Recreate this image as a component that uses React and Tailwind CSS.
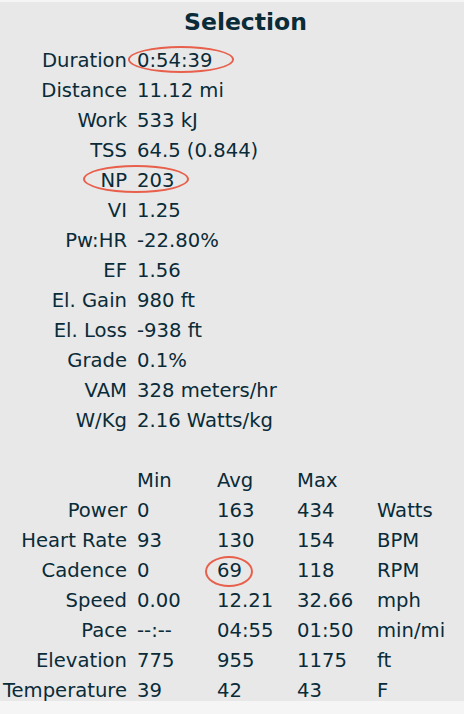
import React from "react";

const summary = [
  ["Duration", "0:54:39"],
  ["Distance", "11.12 mi"],
  ["Work", "533 kJ"],
  ["TSS", "64.5 (0.844)"],
  ["NP", "203"],
  ["VI", "1.25"],
  ["Pw:HR", "-22.80%"],
  ["EF", "1.56"],
  ["El. Gain", "980 ft"],
  ["El. Loss", "-938 ft"],
  ["Grade", "0.1%"],
  ["VAM", "328 meters/hr"],
  ["W/Kg", "2.16 Watts/kg"],
];

const table = [
  ["Power", "0", "163", "434", "Watts"],
  ["Heart Rate", "93", "130", "154", "BPM"],
  ["Cadence", "0", "69", "118", "RPM"],
  ["Speed", "0.00", "12.21", "32.66", "mph"],
  ["Pace", "--:--", "04:55", "01:50", "min/mi"],
  ["Elevation", "775", "955", "1175", "ft"],
  ["Temperature", "39", "42", "43", "F"],
];

export default function App() {
  return (
    <div
      className="relative w-[464px] h-[714px] bg-[#f5f5f5] overflow-hidden text-[#0a2b38]"
      style={{ fontFamily: '"DejaVu Sans", Verdana, sans-serif' }}
    >
      <div className="mt-[2px] h-[699px] bg-[#e8e8e8]">
        <div className="pl-[27px] h-[44px] pt-[2px] text-center text-[23.5px] font-bold leading-[36px]">
          Selection
        </div>
        <div className="grid grid-cols-[127px_1fr] gap-x-[10px] text-[19.6px] leading-[30px]">
          {summary.map(([k, v]) => (
            <React.Fragment key={k}>
              <div className="text-right whitespace-nowrap">{k}</div>
              <div className="whitespace-nowrap">{v}</div>
            </React.Fragment>
          ))}
        </div>
        <div className="h-[30px]" />
        <div className="grid grid-cols-[127px_80px_80px_80px_1fr] text-[19.6px] leading-[30px]">
          <div />
          <div className="ml-[10px]">Min</div>
          <div className="ml-[10px]">Avg</div>
          <div className="ml-[10px]">Max</div>
          <div className="ml-[10px]" />
          {table.map((r) => (
            <React.Fragment key={r[0]}>
              <div className="text-right whitespace-nowrap">{r[0]}</div>
              <div className="ml-[10px] whitespace-nowrap">{r[1]}</div>
              <div className="ml-[10px] whitespace-nowrap">{r[2]}</div>
              <div className="ml-[10px] whitespace-nowrap">{r[3]}</div>
              <div className="ml-[10px] whitespace-nowrap">{r[4]}</div>
            </React.Fragment>
          ))}
        </div>
      </div>
      <div className="absolute left-[128px] top-[46px] w-[106px] h-[27px] rounded-[50%] border-[2.5px] border-[#e8604c]" />
      <div className="absolute left-[83px] top-[165px] w-[106px] h-[28px] rounded-[50%] border-[2.5px] border-[#e8604c]" />
      <div className="absolute left-[205px] top-[556px] w-[48px] h-[31px] rounded-[50%] border-[2.5px] border-[#e8604c]" />
    </div>
  );
}
